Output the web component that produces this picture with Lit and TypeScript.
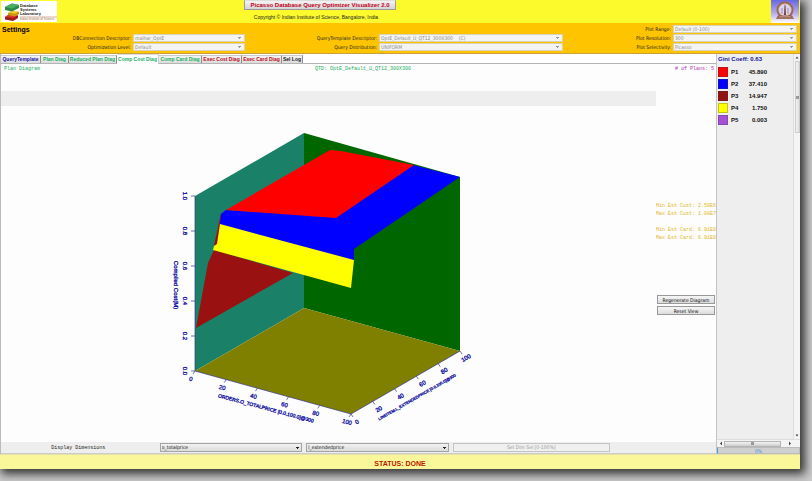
import { LitElement, html, css, svg } from "lit";
import { customElement, state } from "lit/decorators.js";
import { classMap } from "lit/directives/class-map.js";

const settings = [
  { id: "range", area: "c1", label: "Plot Range:", value: "Default (0-100)" },
  { id: "conn", area: "a2", label: "DBConnection Descriptor:", value: "malhar_OptE" },
  { id: "qtd", area: "b2", label: "QueryTemplate Descriptor:", value: "OptE_Default_U_QT12_300X300\u00a0\u00a0\u00a0\u00a0(C)" },
  { id: "res", area: "c2", label: "Plot Resolution:", value: "300" },
  { id: "opt", area: "a3", label: "Optimization Level:", value: "Default" },
  { id: "dist", area: "b3", label: "Query Distribution:", value: "UNIFORM" },
  { id: "sel", area: "c3", label: "Plot Selectivity:", value: "Picasso" },
];

const tabs = [
  { name: "QueryTemplate", tone: "navy" },
  { name: "Plan Diag", tone: "green" },
  { name: "Reduced Plan Diag", tone: "green" },
  { name: "Comp Cost Diag", tone: "green" },
  { name: "Comp Card Diag", tone: "green" },
  { name: "Exec Cost Diag", tone: "red" },
  { name: "Exec Card Diag", tone: "red" },
  { name: "Sel Log", tone: "dark" },
];

const plans = [
  { name: "P1", share: "45.890", swatch: "s1" },
  { name: "P2", share: "37.410", swatch: "s2" },
  { name: "P3", share: "14.947", swatch: "s3" },
  { name: "P4", share: "1.750", swatch: "s4" },
  { name: "P5", share: "0.003", swatch: "s5" },
];

@customElement("cost-chart")
class CostChart extends LitElement {
  static styles = css`
    :host { display: block; }
    svg { display: block; width: 100%; height: auto; }
    text {
      font-family: "Liberation Sans", Arial, sans-serif;
      fill: #0a0a9c;
      stroke: #0a0a9c;
      stroke-width: 0.3;
      text-anchor: middle;
      dominant-baseline: central;
    }
    .tick { font-size: 6px; }
    .cost { font-size: 6px; }
    .orders { font-size: 5px; }
    .line { font-size: 4px; }
    .axis { stroke: #33338c; stroke-width: 0.7; fill: none; }
  `;

  render() {
    const steps = [0, 1, 2, 3, 4, 5];
    return html`
      <svg viewBox="2 106 655 336" role="img" aria-label="Compilation cost diagram">
        <polygon points="196,196 305,133 305,308 196,371" fill="#1b8068" />
        <polygon points="305,133 461,177 461,351 305,308" fill="#006600" />
        <polygon points="196,371 305,308 461,351 352,414" fill="#808000" />
        <polygon points="215,250 294,273 197,328 209,263" fill="#991111" />
        <polygon points="222,213 223,222 218,246 215,245 218,232" fill="#991111" />
        <polygon points="222,214 227,210 337,217 414,165 461,177 355,249 355,261 221,225" fill="#0000ff" />
        <polygon points="227,210 331,150 342,151 415,165 337,218" fill="#ff0000" />
        <polygon points="221,224 355,260 352,288 214,250 215,246 218,244" fill="#ffff00" />
        <path class="axis" d="M196 196V371L352 414L461 351" />
        ${steps.map((i) => svg`
          <path class="axis" d="M192 ${371 - i * 35}h4" />
          <text class="tick" transform="translate(186 ${371 - i * 35}) rotate(90)">${(i / 5).toFixed(1)}</text>
          <path class="axis" d="M${196 + i * 31.2} ${371 + i * 8.6}l-2 3" />
          <text class="tick" transform="translate(${192 + i * 31.2} ${379 + i * 8.6}) rotate(15)">${i * 20}</text>
          <path class="axis" d="M${352 + i * 21.8} ${414 - i * 12.6}l2 3" />
          <text class="tick" transform="translate(${358 + i * 21.8} ${422 - i * 12.8}) rotate(-30)">${i * 20}</text>
        `)}
        <text class="cost" transform="translate(177 285) rotate(90)">Compiled Cost(M)</text>
        <text class="orders" transform="translate(267 408) rotate(15)">ORDERS.O_TOTALPRICE [0.0,100.0]@300</text>
        <text class="line" transform="translate(418 397) rotate(-30)">LINEITEM.L_EXTENDEDPRICE [0.0,100.0]@300</text>
      </svg>
    `;
  }
}

@customElement("app-root")
class AppRoot extends LitElement {
  static styles = css`
    * { box-sizing: border-box; }
    :host {
      display: block;
      padding: 0 12px 12px 0;
      background: #cbcbcb;
      overflow: hidden;
      font: 5px/8px "DejaVu Sans Condensed", "Liberation Sans", sans-serif;
      color: #222;
    }
    button, select { font: inherit; color: inherit; margin: 0; border-radius: 0; appearance: none; }
    .window { background: #fdfdfd; box-shadow: 3px 3px 9px 2px rgba(0, 0, 0, 0.75); }
    .mono { font-family: "Liberation Mono", monospace; }

    header {
      display: grid;
      grid-template-columns: 244fr 152px 375fr 28px;
      height: 23px;
      padding-right: 1px;
      background: #fcfa2c;
    }
    .logo { display: block; width: 56px; height: 21px; margin: 1px; }
    .logo .name { font: bold 4px "Liberation Sans", sans-serif; fill: #222; }
    .logo .inst { font: 3px "Liberation Sans", sans-serif; fill: #a46a48; }
    .brand { display: flex; flex-direction: column; align-items: center; gap: 3px; }
    .title {
      width: 100%;
      height: 10px;
      padding: 0;
      border: 1px solid #999;
      border-top-color: #ddd;
      background: linear-gradient(#f4f4f4, #d4d4d8);
      font: bold 6px/8px "Liberation Sans", sans-serif;
      color: #c00018;
      white-space: nowrap;
    }
    .copy { margin: 0 8px 0 0; font-family: "Liberation Sans", sans-serif; white-space: nowrap; align-self: center; }
    .emblem { display: block; width: 28px; height: 23px; }

    .settings {
      display: grid;
      grid-template-columns: 133fr 112fr 134fr 184fr 110fr 124fr;
      grid-template-rows: repeat(3, 9px);
      grid-template-areas: "h h . . lc1 c1" "la2 a2 lb2 b2 lc2 c2" "la3 a3 lb3 b3 lc3 c3";
      padding: 2px 3px 1px 0;
      background: #ffc400;
      border-bottom: 1px solid #c9a23c;
    }
    .settings h2 { grid-area: h; margin: 0 0 0 2px; font: bold 7px/9px "Liberation Sans", sans-serif; color: #000; }
    .settings label { text-align: right; padding-right: 2px; line-height: 9px; white-space: nowrap; }
    .la2 { grid-area: la2; } .la3 { grid-area: la3; } .lb2 { grid-area: lb2; } .lb3 { grid-area: lb3; }
    .lc1 { grid-area: lc1; } .lc2 { grid-area: lc2; } .lc3 { grid-area: lc3; }
    .a2 { grid-area: a2; } .a3 { grid-area: a3; } .b2 { grid-area: b2; } .b3 { grid-area: b3; }
    .c1 { grid-area: c1; } .c2 { grid-area: c2; } .c3 { grid-area: c3; }
    .settings select {
      width: 100%;
      height: 8px;
      padding: 0 8px 0 1px;
      border: 1px solid #d8d2b8;
      line-height: 6px;
      color: #8c8c8c;
      opacity: 1;
      background: linear-gradient(#999, #999) right 3px top 2px / 3px 1px no-repeat,
        linear-gradient(#999, #999) right 4px top 3px / 1px 1px no-repeat, #f4f4f2;
    }

    .body { display: grid; grid-template-columns: 1fr 84px; }
    .main { min-width: 0; border-left: 1px solid #bbb; overflow: hidden; }
    .tabs {
      display: grid;
      grid-template-columns: 40px 28px 48px 42px 43px 40px 40px 21px;
      height: 10px;
      align-items: end;
      border-bottom: 1px solid #b4b4b4;
      background: #fff;
    }
    .tab {
      height: 8px;
      padding: 0;
      border: 0;
      border-right: 1px solid #8c8c8c;
      border-top: 1px solid #ccc;
      background: linear-gradient(#f4f4f4, #dcdcdc);
      font: bold 5px/7px "Liberation Sans", sans-serif;
      white-space: nowrap;
      text-align: center;
    }
    .tab.active { height: 10px; margin-bottom: -1px; background: #fff; border-top-color: #ddd; border-right-color: #ccc; }
    .navy { color: #1414a0; }
    .green { color: #22b060; }
    .red { color: #c00818; }
    .dark { color: #222; }

    .info { display: grid; grid-template-columns: 312fr 200fr 200fr; padding: 1px 2px 0 3px; height: 27px; color: #22b060; }
    .info span { white-space: nowrap; }
    .info .count { text-align: right; color: #b030c0; }
    .plot { display: grid; grid-template-columns: 1fr 60px; }
    .band { height: 15px; background: #eee; }
    .side { padding-top: 111px; overflow: hidden; white-space: nowrap; }
    .costs { margin: 0 0 53px; color: #dcb820; }
    .costs p { margin: 0; }
    .costs p + p.gap { margin-top: 8px; }
    .side button {
      display: block;
      width: 58px;
      height: 9px;
      margin: 0 0 2px 1px;
      padding: 0;
      border: 1px solid #999;
      background: linear-gradient(#f6f6f6, #dcdcdc);
      line-height: 6px;
      color: #111;
    }
    .dims {
      display: grid;
      grid-template-columns: 154fr 142fr 142fr 156fr 102fr;
      column-gap: 4px;
      align-items: center;
      height: 12px;
      background: #eee;
      border-bottom: 1px solid #ccc;
    }
    .dims label { text-align: center; }
    .dims select {
      height: 9px;
      padding: 0 8px 0 1px;
      border: 1px solid #a4a4a4;
      line-height: 7px;
      color: #111;
      background: linear-gradient(#222, #222) right 2px top 3px / 3px 1px no-repeat,
        linear-gradient(#222, #222) right 3px top 4px / 1px 1px no-repeat,
        linear-gradient(#f2f2f2, #dcdcdc);
    }
    .dims button { height: 9px; padding: 0; border: 1px solid #c4c4c4; background: #f0f0f0; color: #999; line-height: 7px; }

    aside { display: flex; flex-direction: column; background: #eee; border-left: 1px solid #c4c4c4; }
    .scroll { display: flex; flex: 1; }
    .legend { flex: 1; padding: 2px 0 0 1px; }
    .legend h3 { margin: 0 0 4px; font: bold 6px/7px "Liberation Sans", sans-serif; color: #1414a0; white-space: nowrap; }
    table { border-collapse: collapse; font: bold 6px/10px "Liberation Sans", sans-serif; color: #111; }
    td { padding: 0 0 2px; height: 12px; }
    .pname { width: 18px; padding-left: 3px; text-align: left; font-weight: bold; }
    .share { width: 21px; text-align: right; }
    .swatch { width: 10px; height: 10px; border: 1px solid rgba(60, 60, 60, 0.3); }
    .s1 { background: #f00; } .s2 { background: #00f; } .s3 { background: #911010; }
    .s4 { background: #ff0; } .s5 { background: #a650d8; }
    .vbar, .hbar { display: flex; background: #f4f4f4; align-items: center; }
    .vbar { flex-direction: column; width: 7px; border-left: 1px solid #ddd; }
    .vthumb { width: 5px; height: 72px; margin-bottom: auto; border: 1px solid #ccc; background: linear-gradient(90deg, #f4f4f4, #ddd); display: grid; place-items: center; }
    .arrow { display: block; width: 6px; height: 7px; fill: #444; }
    .grip { display: block; width: 3px; height: 3px; background: #999; }
    .hbar { height: 8px; padding: 0 7px 0 1px; border-top: 1px solid #ddd; }
    .hthumb { flex: 1; height: 6px; margin-right: 6px; border: 1px solid #b4b4b4; background: linear-gradient(#f4f4f4, #ccc); display: grid; place-items: center; }
    .progress { height: 7px; border: 1px solid #bbb; border-left-color: #4a9be0; background: #d0d0d0; color: #3a94d8; text-align: center; line-height: 6px; }

    footer {
      height: 15px;
      padding-top: 3px;
      border-top: 1px solid #e4e2a8;
      background: #f9f79a;
      font: bold 7px/11px "Liberation Sans", sans-serif;
      color: #b81800;
      text-align: center;
    }
  `;

  @state() private active = "Comp Cost Diag";

  render() {
    return html`
      <div class="window">
        <header>
          <svg class="logo" viewBox="0 0 56 21" role="img" aria-label="Database Systems Laboratory">
            <rect width="56" height="21" fill="#fff" />
            <path d="M4 16l5-2.500 8 1v2.500l-5 3-8-1.500z" fill="#a01818" />
            <path d="M4 15.500l5-2.500 8 1-5 3z" fill="#e03028" />
            <path d="M7 12l4-2 7 1v2l-4 2.500-7-1.500z" fill="#c89a10" />
            <path d="M7 11.500l4-2 7 1-4 2z" fill="#f4d030" />
            <path d="M4 6l7-3.500 7 1.500v3l-7 3.500-7-1.500z" fill="#2c8a48" />
            <path d="M4 6l7-3.500 7 1.500-7 3.500z" fill="#48b064" />
            <text class="name" x="19" y="6">Database</text>
            <text class="name" x="19" y="10">Systems</text>
            <text class="name" x="19" y="14">Laboratory</text>
            <path d="M19 16h37" stroke="#b87850" stroke-width=".6" />
            <text class="inst" x="19" y="19">Indian Institute of Science</text>
          </svg>
          <div class="brand">
            <button class="title">Picasso Database Query Optimizer Visualizer 2.0</button>
            <p class="copy">Copyright © Indian Institute of Science, Bangalore, India</p>
          </div>
          <span></span>
          <svg class="emblem" viewBox="0 0 28 23" role="img" aria-label="Institute emblem">
            <defs>
              <linearGradient id="sky" x1="0" y1="0" x2="0" y2="1">
                <stop offset="0" stop-color="#6868e0" />
                <stop offset=".6" stop-color="#b8b0f0" />
                <stop offset="1" stop-color="#fff" />
              </linearGradient>
            </defs>
            <rect width="28" height="23" fill="url(#sky)" />
            <circle cx="14" cy="10" r="7.500" fill="#d8d4f8" stroke="#a06848" stroke-width="2" />
            <circle cx="14" cy="10" r="5.500" fill="none" stroke="#e8c8a8" stroke-width=".7" />
            <path d="M13 15l.5-9 .5-2 .5 2 .5 9z" fill="#704030" />
            <path d="M11 14V8M17 14V8" stroke="#907088" stroke-width=".7" />
            <path d="M5 19l2-3.500h14L23 19z" fill="#8c5848" />
            <path d="M6 18h16M8 16.500h12" stroke="#d8b098" stroke-width=".6" />
          </svg>
        </header>

        <section class="settings">
          <h2>Settings</h2>
          ${settings.map((s) => html`
            <label class="l${s.area}" for=${s.id}>${s.label}</label>
            <select class=${s.area} id=${s.id} disabled><option>${s.value}</option></select>
          `)}
        </section>

        <div class="body">
          <div class="main">
            <nav class="tabs" role="tablist">
              ${tabs.map((t) => html`
                <button
                  role="tab"
                  aria-selected=${t.name === this.active}
                  class=${classMap({ tab: true, active: t.name === this.active, [t.tone]: true })}
                  @click=${() => (this.active = t.name)}
                >${t.name}</button>
              `)}
            </nav>
            <div class="info mono">
              <span>Plan Diagram</span>
              <span>QTD: OptE_Default_U_QT12_300X300</span>
              <span class="count"># of Plans: 5</span>
            </div>
            <div class="plot">
              <div>
                <div class="band"></div>
                <cost-chart></cost-chart>
              </div>
              <div class="side">
                <div class="costs mono">
                  <p>Min Est Cost: 2.50E6</p>
                  <p>Max Est Cost: 1.08E7</p>
                  <p class="gap">Min Est Card: 6.91E0</p>
                  <p>Max Est Card: 6.91E0</p>
                </div>
                <button>Regenerate Diagram</button>
                <button>Reset View</button>
              </div>
            </div>
            <div class="dims">
              <label class="mono" for="dimx">Display Dimensions</label>
              <select id="dimx"><option>o_totalprice</option></select>
              <select id="dimy" aria-label="Second dimension"><option>l_extendedprice</option></select>
              <button disabled>Set Dim Sel [0-100%]</button>
            </div>
          </div>

          <aside>
            <div class="scroll">
              <div class="legend">
                <h3>Gini Coeff: 0.63</h3>
                <table>
                  ${plans.map((p) => html`
                    <tr>
                      <td><div class="swatch ${p.swatch}"></div></td>
                      <td class="pname">${p.name}</td>
                      <td class="share">${p.share}</td>
                    </tr>
                  `)}
                </table>
              </div>
              <div class="vbar">
                <svg class="arrow" viewBox="0 0 6 7"><path d="M1.500 4.500L3 2.500l1.500 2z" /></svg>
                <div class="vthumb"><span class="grip"></span></div>
                <svg class="arrow" viewBox="0 0 6 7"><path d="M1.500 2.500L3 4.500l1.500-2z" /></svg>
              </div>
            </div>
            <div class="hbar">
              <svg class="arrow" viewBox="0 0 6 7"><path d="M4 1.500L2 3.500l2 2z" /></svg>
              <div class="hthumb"><span class="grip"></span></div>
              <svg class="arrow" viewBox="0 0 6 7"><path d="M2 1.500l2 2-2 2z" /></svg>
            </div>
            <div class="progress">0%</div>
          </aside>
        </div>
        <footer>STATUS: DONE</footer>
      </div>
    `;
  }
}
